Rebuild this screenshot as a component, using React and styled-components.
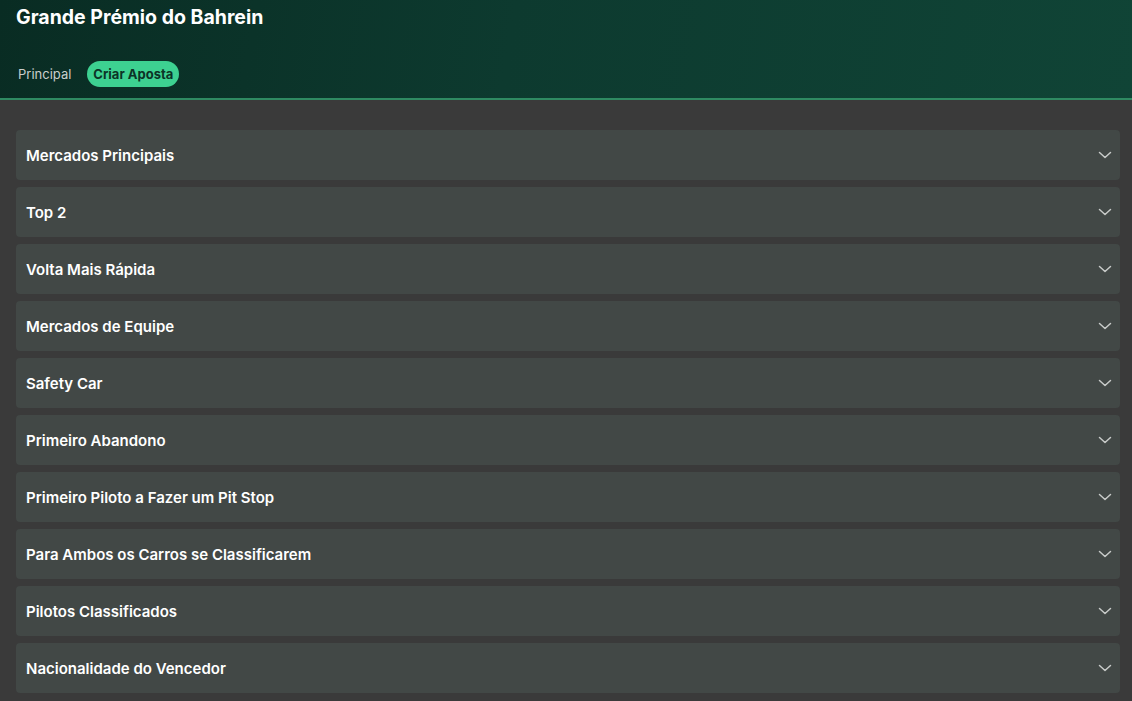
import React from 'react';
import styled, { createGlobalStyle } from 'styled-components';

const GlobalStyle = createGlobalStyle`
html, body {
  margin: 0;
  padding: 0;
  background: #3a3a3a;
  font-family: Inter, "Noto Sans", sans-serif;
}
`;

const Page = styled.div`
min-height: 701px;
background: #3a3a3a;
`;

const Header = styled.header`
height: 98px;
padding: 0 16px;
display: flex;
flex-direction: column;
background: linear-gradient(100deg, #092c23 0%, #0d3a2f 45%, #104436 100%);
border-bottom: 2px solid #2f8a62;
`;

const Title = styled.h1`
margin: 0;
padding-top: 5px;
font-size: 19.5px;
line-height: 24px;
font-weight: 700;
color: #ffffff;
`;

const Tabs = styled.nav`
display: flex;
align-items: center;
gap: 14px;
margin-top: 32px;
`;

const Tab = styled.button`
border: none;
font-family: inherit;
font-size: 13px;
line-height: 16px;
height: 26px;
padding: ${p => (p.$active ? '0 6px' : '0 2px')};
border-radius: 13px;
cursor: pointer;
font-weight: ${p => (p.$active ? 700 : 400)};
color: ${p => (p.$active ? '#0c3327' : '#c9cfcc')};
background: ${p => (p.$active ? '#3dd191' : 'transparent')};
`;

const List = styled.div`
display: flex;
flex-direction: column;
gap: 7px;
padding: 30px 12px 8px 16px;
`;

const Row = styled.div`
height: 50px;
display: flex;
align-items: center;
justify-content: space-between;
padding: 0 8px 0 10px;
background: #424846;
border-radius: 4px;
cursor: pointer;
`;

const RowTitle = styled.span`
font-size: 15px;
font-weight: 600;
color: #ffffff;
`;

const Chevron = () => (
  <svg width="14" height="8" viewBox="0 0 14 8" fill="none">
    <path d="M1.5 1.5 L7 6.5 L12.5 1.5" stroke="#c8cbc9" strokeWidth="1.5" strokeLinecap="round" strokeLinejoin="round" />
  </svg>
);

const markets = [
  'Mercados Principais',
  'Top 2',
  'Volta Mais Rápida',
  'Mercados de Equipe',
  'Safety Car',
  'Primeiro Abandono',
  'Primeiro Piloto a Fazer um Pit Stop',
  'Para Ambos os Carros se Classificarem',
  'Pilotos Classificados',
  'Nacionalidade do Vencedor',
];

const App = () => {
  return (
    <Page>
      <GlobalStyle />
      <Header>
        <Title>Grande Prémio do Bahrein</Title>
        <Tabs>
          <Tab>Principal</Tab>
          <Tab $active>Criar Aposta</Tab>
        </Tabs>
      </Header>
      <List>
        {markets.map(name => (
          <Row key={name}>
            <RowTitle>{name}</RowTitle>
            <Chevron />
          </Row>
        ))}
      </List>
    </Page>
  );
};

export default App;
